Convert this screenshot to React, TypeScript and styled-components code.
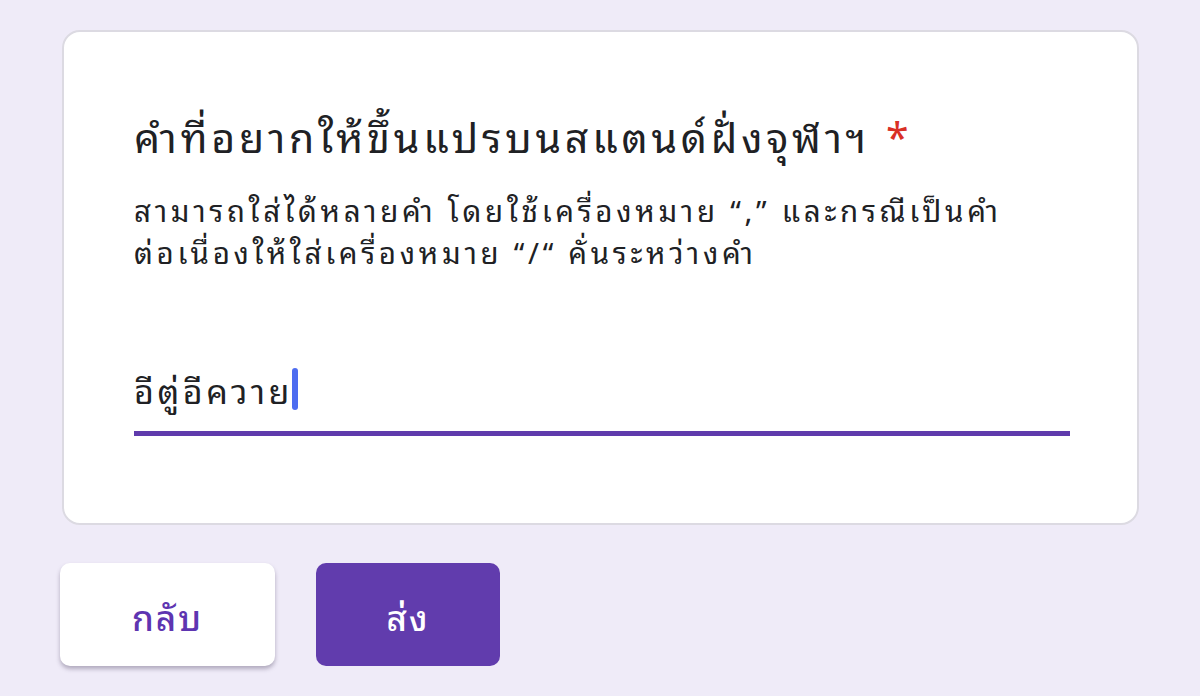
import React from 'react'
import styled, { createGlobalStyle } from 'styled-components'

// ____________________________________________________________________________
//
const GlobalStyle = createGlobalStyle`
  html, body {
    margin: 0;
    padding: 0;
    background: #efebf8;
  }
  body {
    font-family: "Noto Sans Thai Looped", "Noto Sans Thai", "Noto Sans", sans-serif;
  }
`
// ____________________________________________________________________________
//
export default function App() {
  return (
    <Page>
      <GlobalStyle />
      <Card>
        <Title>
          คำที่อยากให้ขึ้นแปรบนสแตนด์ฝั่งจุฬาฯ <Required>*</Required>
        </Title>
        <Description>
          สามารถใส่ได้หลายคำ โดยใช้เครื่องหมาย “,” และกรณีเป็นคำ
          <br />
          ต่อเนื่องให้ใส่เครื่องหมาย “/“ คั่นระหว่างคำ
        </Description>
        <Field>
          <Value>
            อีตู่อีควาย
            <Caret />
          </Value>
        </Field>
      </Card>
      <Actions>
        <Button>กลับ</Button>
        <Button primary>ส่ง</Button>
      </Actions>
    </Page>
  )
}
// ____________________________________________________________________________
//
const Page = styled.div`
  width: 1200px;
  height: 696px;
  box-sizing: border-box;
  padding: 30px 61px 0 62px;
  overflow: hidden;
`

const Card = styled.div`
  box-sizing: border-box;
  height: 495px;
  background: #fff;
  border: 2px solid #dcdae2;
  border-radius: 18px;
  padding: 76px 70px 0 70px;
`

const Title = styled.div`
  font-size: 41px;
  line-height: 1.3;
  letter-spacing: 3.8px;
  color: #202124;
`

const Required = styled.span`
  color: #d93025;
  margin-left: 2px;
`

const Description = styled.div`
  margin-top: 27px;
  font-size: 29.5px;
  line-height: 42px;
  letter-spacing: 3.7px;
  color: #202124;
`

const Field = styled.div`
  margin-top: 96px;
  width: 936px;
  border-bottom: 5px solid #5f3bac;
  padding-bottom: 21px;
`

const Value = styled.div`
  display: flex;
  align-items: center;
  font-size: 34px;
  line-height: 42px;
  letter-spacing: 3.6px;
  color: #202124;
`

const Caret = styled.span`
  display: inline-block;
  width: 6px;
  height: 42px;
  border-radius: 3px;
  background: #4d6cf0;
  margin-left: -1px;
`

const Actions = styled.div`
  display: flex;
  gap: 41px;
  margin-top: 38px;
  margin-left: -2px;
`

const Button = styled.button<{ primary?: boolean }>`
  box-sizing: border-box;
  height: 103px;
  width: ${(p) => (p.primary ? '184px' : '215px')};
  border: none;
  border-radius: 10px;
  font-family: inherit;
  font-size: 35px;
  font-weight: 500;
  letter-spacing: 2px;
  background: ${(p) => (p.primary ? '#613cad' : '#fff')};
  color: ${(p) => (p.primary ? '#fff' : '#5e35b1')};
  box-shadow: ${(p) =>
    p.primary ? 'none' : '0 3px 4px rgba(60, 50, 80, 0.35)'};
  padding: 0;
`
